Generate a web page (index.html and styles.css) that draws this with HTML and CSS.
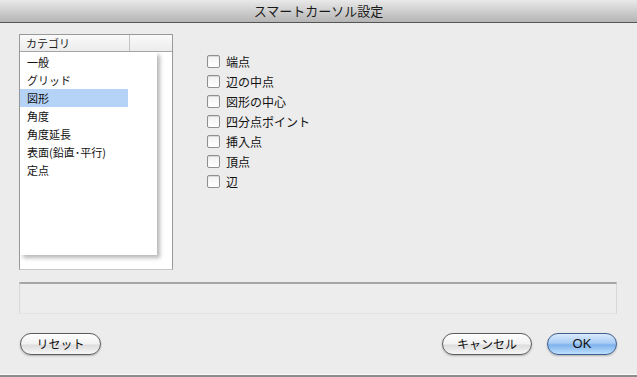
FILE: index.html
```html
<!DOCTYPE html>
<html lang="ja">

<head>
    <meta charset="UTF-8">
    <meta name="viewport" content="width=device-width, initial-scale=1.0">
    <title>スマートカーソル設定</title>
    <link rel="stylesheet" href="styles.css">
</head>

<body>
    <div class="window">
        <div class="titlebar">スマートカーソル設定</div>

        <div class="content">
            <div class="top">
                <!-- カテゴリ一覧 -->
                <div class="list">
                    <div class="list-head">
                        <div class="col-main">カテゴリ</div>
                        <div class="col-rest"></div>
                    </div>
                    <div class="list-body">
                        <div class="items">
                            <div class="item">一般</div>
                            <div class="item">グリッド</div>
                            <div class="item selected">図形</div>
                            <div class="item">角度</div>
                            <div class="item">角度延長</div>
                            <div class="item">表面(鉛直･平行)</div>
                            <div class="item">定点</div>
                        </div>
                    </div>
                </div>

                <!-- オプション -->
                <div class="options">
                    <label class="check"><span class="box"></span>端点</label>
                    <label class="check"><span class="box"></span>辺の中点</label>
                    <label class="check"><span class="box"></span>図形の中心</label>
                    <label class="check"><span class="box"></span>四分点ポイント</label>
                    <label class="check"><span class="box"></span>挿入点</label>
                    <label class="check"><span class="box"></span>頂点</label>
                    <label class="check"><span class="box"></span>辺</label>
                </div>
            </div>

            <div class="status"></div>

            <div class="buttons">
                <button class="btn reset">リセット</button>
                <div class="spacer"></div>
                <button class="btn cancel">キャンセル</button>
                <button class="btn ok">OK</button>
            </div>
        </div>
    </div>
</body>

</html>
```

FILE: styles.css
```css
* {
    box-sizing: border-box;
}

body {
    margin: 0;
    background-color: #ececec;
    font-family: "Noto Sans CJK JP", "Noto Sans", sans-serif;
    color: #111;
}

.window {
    width: 637px;
    height: 377px;
    display: flex;
    flex-direction: column;
    background-color: #ececec;
    border-bottom: 2px solid #8c8c8c;
}

.titlebar {
    height: 23px;
    line-height: 22px;
    text-align: center;
    font-size: 13px;
    color: #1a1a1a;
    background: linear-gradient(#e9e9e9, #c9c9c9 60%, #b5b5b5);
    border-bottom: 1px solid #555;
}

.content {
    flex: 1;
    padding: 11px 20px 0 19px;
    display: flex;
    flex-direction: column;
    border-bottom: 1px solid #fafafa;
}

.top {
    display: flex;
}

.list {
    width: 154px;
    height: 236px;
    background-color: #fff;
    border: 1px solid #999;
    border-bottom-color: #c8c8c8;
    display: flex;
    flex-direction: column;
}

.list-head {
    height: 17px;
    display: flex;
    background: linear-gradient(#fafafa, #ececec);
    border-bottom: 1px solid #a8a8a8;
    font-size: 11px;
    line-height: 16px;
}

.col-main {
    width: 110px;
    padding-left: 6px;
    border-right: 1px solid #c4c4c4;
    color: #222;
}

.col-rest {
    flex: 1;
}

.list-body {
    flex: 1;
}

.items {
    width: 137px;
    height: 203px;
    padding-top: 1px;
    background-color: #fff;
    box-shadow: 3px 3px 4px rgba(0, 0, 0, 0.28);
}

.item {
    width: 108px;
    height: 18px;
    line-height: 18px;
    padding-left: 7px;
    font-size: 11px;
    white-space: nowrap;
}

.item.selected {
    background-color: #b5d3f7;
}

.options {
    margin-left: 34px;
    padding-top: 17px;
    display: flex;
    flex-direction: column;
}

.check {
    height: 20px;
    display: flex;
    align-items: center;
    font-size: 12px;
}

.box {
    width: 13px;
    height: 13px;
    margin-right: 6px;
    border: 1px solid #8f8f8f;
    border-radius: 2px;
    background: linear-gradient(#f2f2f2, #fff);
    box-shadow: inset 0 1px 1px rgba(0, 0, 0, 0.12);
}

.status {
    margin-top: 12px;
    width: 598px;
    height: 32px;
    border: 1px solid #d8d8d8;
    border-top: 2px solid #a6a6a6;
    border-bottom-color: #e4e4e4;
    background-color: #ededed;
}

.buttons {
    margin-top: 19px;
    display: flex;
    align-items: center;
    gap: 15px;
}

.spacer {
    flex: 1;
}

.btn {
    height: 22px;
    padding: 0;
    border: 1px solid #5c5c5c;
    border-radius: 11px;
    background: linear-gradient(#ffffff, #f1f1f1 50%, #dcdcdc 55%, #f7f7f7);
    box-shadow: 0 1px 2px rgba(0, 0, 0, 0.25);
    font-family: "Noto Sans CJK JP", "Noto Sans", sans-serif;
    font-size: 12px;
    line-height: 20px;
    color: #111;
}

.btn.reset {
    width: 81px;
    margin-left: 1px;
}

.btn.cancel {
    width: 90px;
}

.btn.ok {
    width: 70px;
    border-color: #3d5f8f;
    background: linear-gradient(#dbeafc, #a9cdf5 45%, #7fb2ec 55%, #bfe0ff);
    font-family: "Liberation Sans", Arial, sans-serif;
    font-size: 13px;
}
```
